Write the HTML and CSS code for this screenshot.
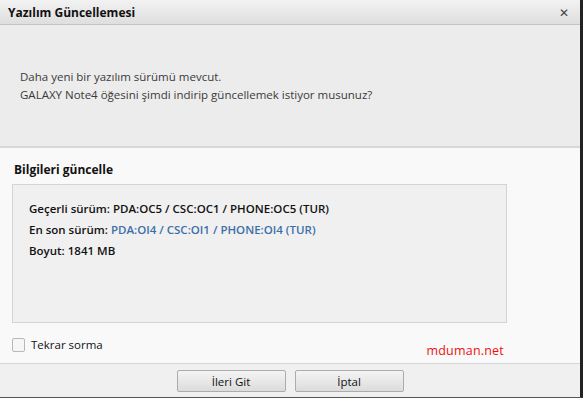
FILE: index.html
```html
<!DOCTYPE html>
<html lang="tr">
<head>
    <meta charset="UTF-8">
    <meta name="viewport" content="width=device-width, initial-scale=1.0">
    <title>Yazılım Güncellemesi</title>
    <link rel="stylesheet" href="styles.css">
</head>
<body>

    <div class="window">
        <!-- Title bar -->
        <div class="titlebar">
            <span class="title">Yazılım Güncellemesi</span>
            <span class="close">&#x2715;</span>
        </div>

        <!-- Message -->
        <div class="message">
            <p>Daha yeni bir yazılım sürümü mevcut.</p>
            <p>GALAXY Note4 öğesini şimdi indirip güncellemek istiyor musunuz?</p>
        </div>

        <!-- Update info -->
        <div class="info">
            <h2>Bilgileri güncelle</h2>
            <div class="infoBox">
                <p>Geçerli sürüm: PDA:OC5 / CSC:OC1 / PHONE:OC5 (TUR)</p>
                <p>En son sürüm: <span class="latest">PDA:OI4 / CSC:OI1 / PHONE:OI4 (TUR)</span></p>
                <p>Boyut: 1841 MB</p>
            </div>
            <div class="options">
                <label class="check"><span class="box"></span>Tekrar sorma</label>
                <span class="brand">mduman.net</span>
            </div>
        </div>

        <!-- Buttons -->
        <div class="footer">
            <button>İleri Git</button>
            <button>İptal</button>
        </div>
    </div>

</body>
</html>
```

FILE: styles.css
```css
body {
    margin: 0;
    background-color: #ffffff;
    font-family: "Open Sans", "Noto Sans", sans-serif;
    font-size: 11.5px;
    color: #333;
}
p {
    margin: 0;
}
.window {
    width: 580px;
    height: 397px;
    background-color: #f0f0f0;
    border-right: 3px solid #222;
    border-bottom: 1px solid #555;
    display: flex;
    flex-direction: column;
}
.titlebar {
    height: 24px;
    background: linear-gradient(#f2f2f2, #dedede);
    border-bottom: 1px solid #c4c4c4;
    display: flex;
    align-items: center;
    justify-content: space-between;
    padding: 0 11px 0 8px;
}
.title {
    font-weight: bold;
    font-size: 12px;
    color: #111;
}
.close {
    font-size: 12px;
    color: #444;
}
.message {
    height: 121px;
    background-color: #ececec;
    border-bottom: 2px solid #d8d8d8;
    padding: 0 20px;
    display: flex;
    flex-direction: column;
    justify-content: center;
    line-height: 18px;
    color: #3a3a3a;
}
.info {
    background-color: #f9f9f9;
    padding: 14px 76px 0 12px;
    height: 201px;
    border-bottom: 1px solid #d6d6d6;
}
.info h2 {
    font-size: 12px;
    font-weight: bold;
    color: #111;
    margin: 0 0 0 2px;
    line-height: 16px;
}
.infoBox {
    margin-top: 6px;
    height: 124px;
    margin-right: -3px;
    background-color: #f0f0f0;
    border: 1px solid #d4d4d4;
    padding: 13px 16px 0;
    line-height: 21px;
    font-weight: 600;
    color: #111;
}
.latest {
    color: #3b6fa8;
}
.options {
    display: flex;
    justify-content: space-between;
    align-items: flex-start;
    padding-top: 15px;
}
.check {
    display: flex;
    align-items: center;
    gap: 6px;
    color: #111;
    line-height: 14px;
}
.box {
    width: 11px;
    height: 12px;
    border: 1px solid #b8b8b8;
    border-radius: 2px;
    background-color: #f6f6f6;
}
.brand {
    color: #f01010;
    font-size: 12.5px;
    line-height: 16px;
    margin-top: 5px;
    letter-spacing: 0.2px;
}
.footer {
    flex: 1;
    display: flex;
    justify-content: center;
    align-items: flex-start;
    gap: 9px;
    padding: 6px 0 0 0;
}
button {
    width: 109px;
    height: 22px;
    font-family: inherit;
    font-size: 11.5px;
    color: #111;
    background: linear-gradient(#f4f4f4, #dcdcdc);
    border: 1px solid #acacac;
    border-radius: 2px;
    padding: 0;
}
```
